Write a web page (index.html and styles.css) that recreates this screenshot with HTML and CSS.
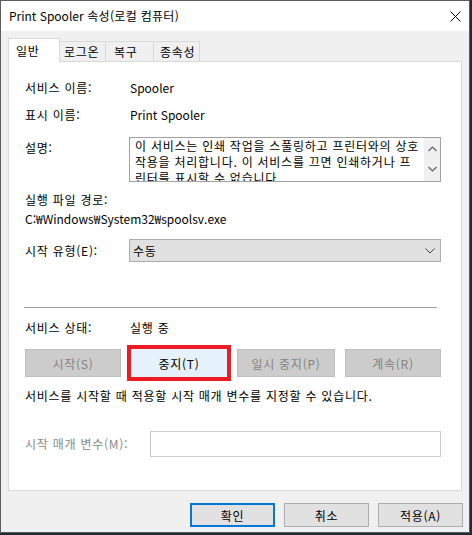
FILE: index.html
```html
<!DOCTYPE html>
<html lang="ko">

<head>
    <meta charset="UTF-8">
    <title>Print Spooler 속성(로컬 컴퓨터)</title>
    <link rel="stylesheet" href="styles.css">
</head>

<body>
    <div class="window">
        <div class="titlebar">
            <span class="title"><span class="en">Print Spooler</span> 속성(로컬 컴퓨터)</span>
            <svg class="close" width="11" height="11" viewBox="0 0 11 11">
                <path d="M0.5 0.5 L10.5 10.5 M10.5 0.5 L0.5 10.5" stroke="#000" stroke-width="1" fill="none" />
            </svg>
        </div>

        <div class="body">
            <div class="tabs">
                <div class="tab active">일반</div>
                <div class="tab">로그온</div>
                <div class="tab">복구</div>
                <div class="tab">종속성</div>
            </div>

            <div class="panel">
                <div class="row">
                    <span class="label">서비스 이름:</span>
                    <span class="value en">Spooler</span>
                </div>
                <div class="row gap-11">
                    <span class="label">표시 이름:</span>
                    <span class="value en">Print Spooler</span>
                </div>
                <div class="row gap-14">
                    <span class="label top">설명:</span>
                    <div class="desc">
                        <div class="desc-text">이 서비스는 인쇄 작업을 스풀링하고 프린터와의 상호<br>작용을 처리합니다. 이 서비스를 끄면 인쇄하거나 프<br>린터를 표시할 수 없습니다.</div>
                        <div class="scrollbar">
                            <svg width="9" height="6" viewBox="0 0 9 6"><path d="M0.5 5 L4.5 1 L8.5 5" stroke="#606060" stroke-width="1.2" fill="none" /></svg>
                            <svg width="9" height="6" viewBox="0 0 9 6"><path d="M0.5 1 L4.5 5 L8.5 1" stroke="#606060" stroke-width="1.2" fill="none" /></svg>
                        </div>
                    </div>
                </div>
                <div class="line gap-10">실행 파일 경로:</div>
                <div class="line gap-3 en">C:₩Windows₩System32₩spoolsv.exe</div>
                <div class="row gap-12 center">
                    <span class="label">시작 유형(E):</span>
                    <div class="select">
                        <span>수동</span>
                        <svg width="10" height="6" viewBox="0 0 10 6"><path d="M0.5 0.5 L5 5 L9.5 0.5" stroke="#404040" stroke-width="1" fill="none" /></svg>
                    </div>
                </div>

                <div class="separator"></div>

                <div class="row gap-12">
                    <span class="label">서비스 상태:</span>
                    <span class="value">실행 중</span>
                </div>
                <div class="actions">
                    <button class="btn disabled">시작(S)</button>
                    <button class="btn hot">중지(T)</button>
                    <button class="btn disabled">일시 중지(P)</button>
                    <button class="btn disabled">계속(R)</button>
                </div>
                <div class="line gap-11">서비스를 시작할 때 적용할 시작 매개 변수를 지정할 수 있습니다.</div>
                <div class="row gap-27 center">
                    <span class="label wide muted">시작 매개 변수(M):</span>
                    <div class="input"></div>
                </div>
            </div>

            <div class="footer">
                <button class="btn dlg default">확인</button>
                <button class="btn dlg">취소</button>
                <button class="btn dlg">적용(A)</button>
            </div>
        </div>
    </div>
</body>

</html>
```

FILE: styles.css
```css
* {
    box-sizing: border-box;
}

body {
    margin: 0;
    background-color: #1f2b38;
    font-family: "Noto Sans CJK KR", "Noto Sans", sans-serif;
    font-size: 12px;
    letter-spacing: 0.75px;
    color: #000;
}

.en {
    letter-spacing: 0;
}

.window {
    width: 470px;
    height: 533px;
    border: 1px solid #5c5c5c;
    background-color: #f0f0f0;
    display: flex;
    flex-direction: column;
}

.titlebar {
    height: 30px;
    background-color: #fff;
    display: flex;
    align-items: center;
    justify-content: space-between;
    padding: 0 8px;
    flex-shrink: 0;
}

.title {
    line-height: 16px;
    letter-spacing: 0.3px;
}

.body {
    flex: 1;
    padding: 7px 7px 0 7px;
    display: flex;
    flex-direction: column;
}

/* tab strip */
.tabs {
    display: flex;
    align-items: flex-end;
    height: 23px;
}

.tab {
    height: 20px;
    line-height: 19px;
    padding: 0;
    border: 1px solid #d9d9d9;
    border-bottom: none;
    margin-left: -1px;
    background-color: #f0f0f0;
    white-space: nowrap;
    overflow: hidden;
}

.tab:nth-child(2) {
    width: 47px;
    padding-left: 4px;
}

.tab:nth-child(3) {
    width: 49px;
    padding-left: 8px;
}

.tab:nth-child(4) {
    width: 47px;
    padding-left: 6px;
}

.tab.active {
    margin-left: 0;
    width: 52px;
    height: 24px;
    line-height: 23px;
    padding-left: 7px;
    background-color: #fff;
    margin-bottom: -1px;
    position: relative;
    z-index: 1;
}

.panel {
    height: 430px;
    background-color: #fff;
    border: 1px solid #d9d9d9;
    padding: 18px 20px 0 16px;
}

.row {
    display: flex;
    line-height: 16px;
}

.row.center {
    align-items: center;
}

.line {
    line-height: 16px;
    white-space: nowrap;
}

.gap-3 { margin-top: 3px; }
.gap-10 { margin-top: 10px; }
.gap-11 { margin-top: 11px; }
.gap-12 { margin-top: 12px; }
.gap-14 { margin-top: 14px; }
.gap-27 { margin-top: 27px; }

.label {
    width: 104px;
    flex-shrink: 0;
    white-space: nowrap;
}

.label.top {
    padding-top: 3px;
}

.label.wide {
    width: 125px;
}

.muted {
    color: #8a8a8a;
}

.value {
    padding-left: 1px;
}

/* description box */
.desc {
    flex: 1;
    height: 45px;
    border: 1px solid #a0a0a0;
    display: flex;
    overflow: hidden;
}

.desc-text {
    flex: 1;
    padding: 0 2px 0 5px;
    line-height: 16px;
    white-space: nowrap;
    overflow: hidden;
}

.scrollbar {
    width: 16px;
    flex-shrink: 0;
    background-color: #f0f0f0;
    display: flex;
    flex-direction: column;
    align-items: center;
    justify-content: space-between;
    padding: 8px 0 9px 0;
}

.select {
    flex: 1;
    height: 23px;
    background-color: #e1e1e1;
    border: 1px solid #adadad;
    display: flex;
    align-items: center;
    justify-content: space-between;
    padding: 0 5px 0 3px;
}

.separator {
    height: 1px;
    background-color: #a0a0a0;
    margin: 45px 4px 0 -1px;
}

/* service buttons */
.actions {
    display: grid;
    grid-template-columns: 96px 96px 98px 96px;
    column-gap: 10px;
    margin-top: 13px;
    padding-right: 1px;
}

.btn {
    height: 28px;
    font-family: inherit;
    font-size: 12px;
    letter-spacing: inherit;
    background-color: #e1e1e1;
    border: 1px solid #adadad;
    color: #000;
    padding: 0;
}

.btn.disabled {
    background-color: #cccccc;
    border-color: #bfbfbf;
    color: #838383;
}

.btn.hot {
    background-color: #e5f1fb;
    border: 1px solid #e5f1fb;
    outline: 4px solid #ed1c24;
    outline-offset: 0;
}

.input {
    flex: 1;
    height: 26px;
    border: 1px solid #cccccc;
    background-color: #fff;
}

.footer {
    display: flex;
    justify-content: flex-end;
    gap: 9px;
    padding: 12px 0 0 0;
    margin-right: -1px;
}

.btn.dlg {
    width: 85px;
    height: 24px;
}

.btn.dlg.default {
    border: 2px solid #0078d7;
}
```
